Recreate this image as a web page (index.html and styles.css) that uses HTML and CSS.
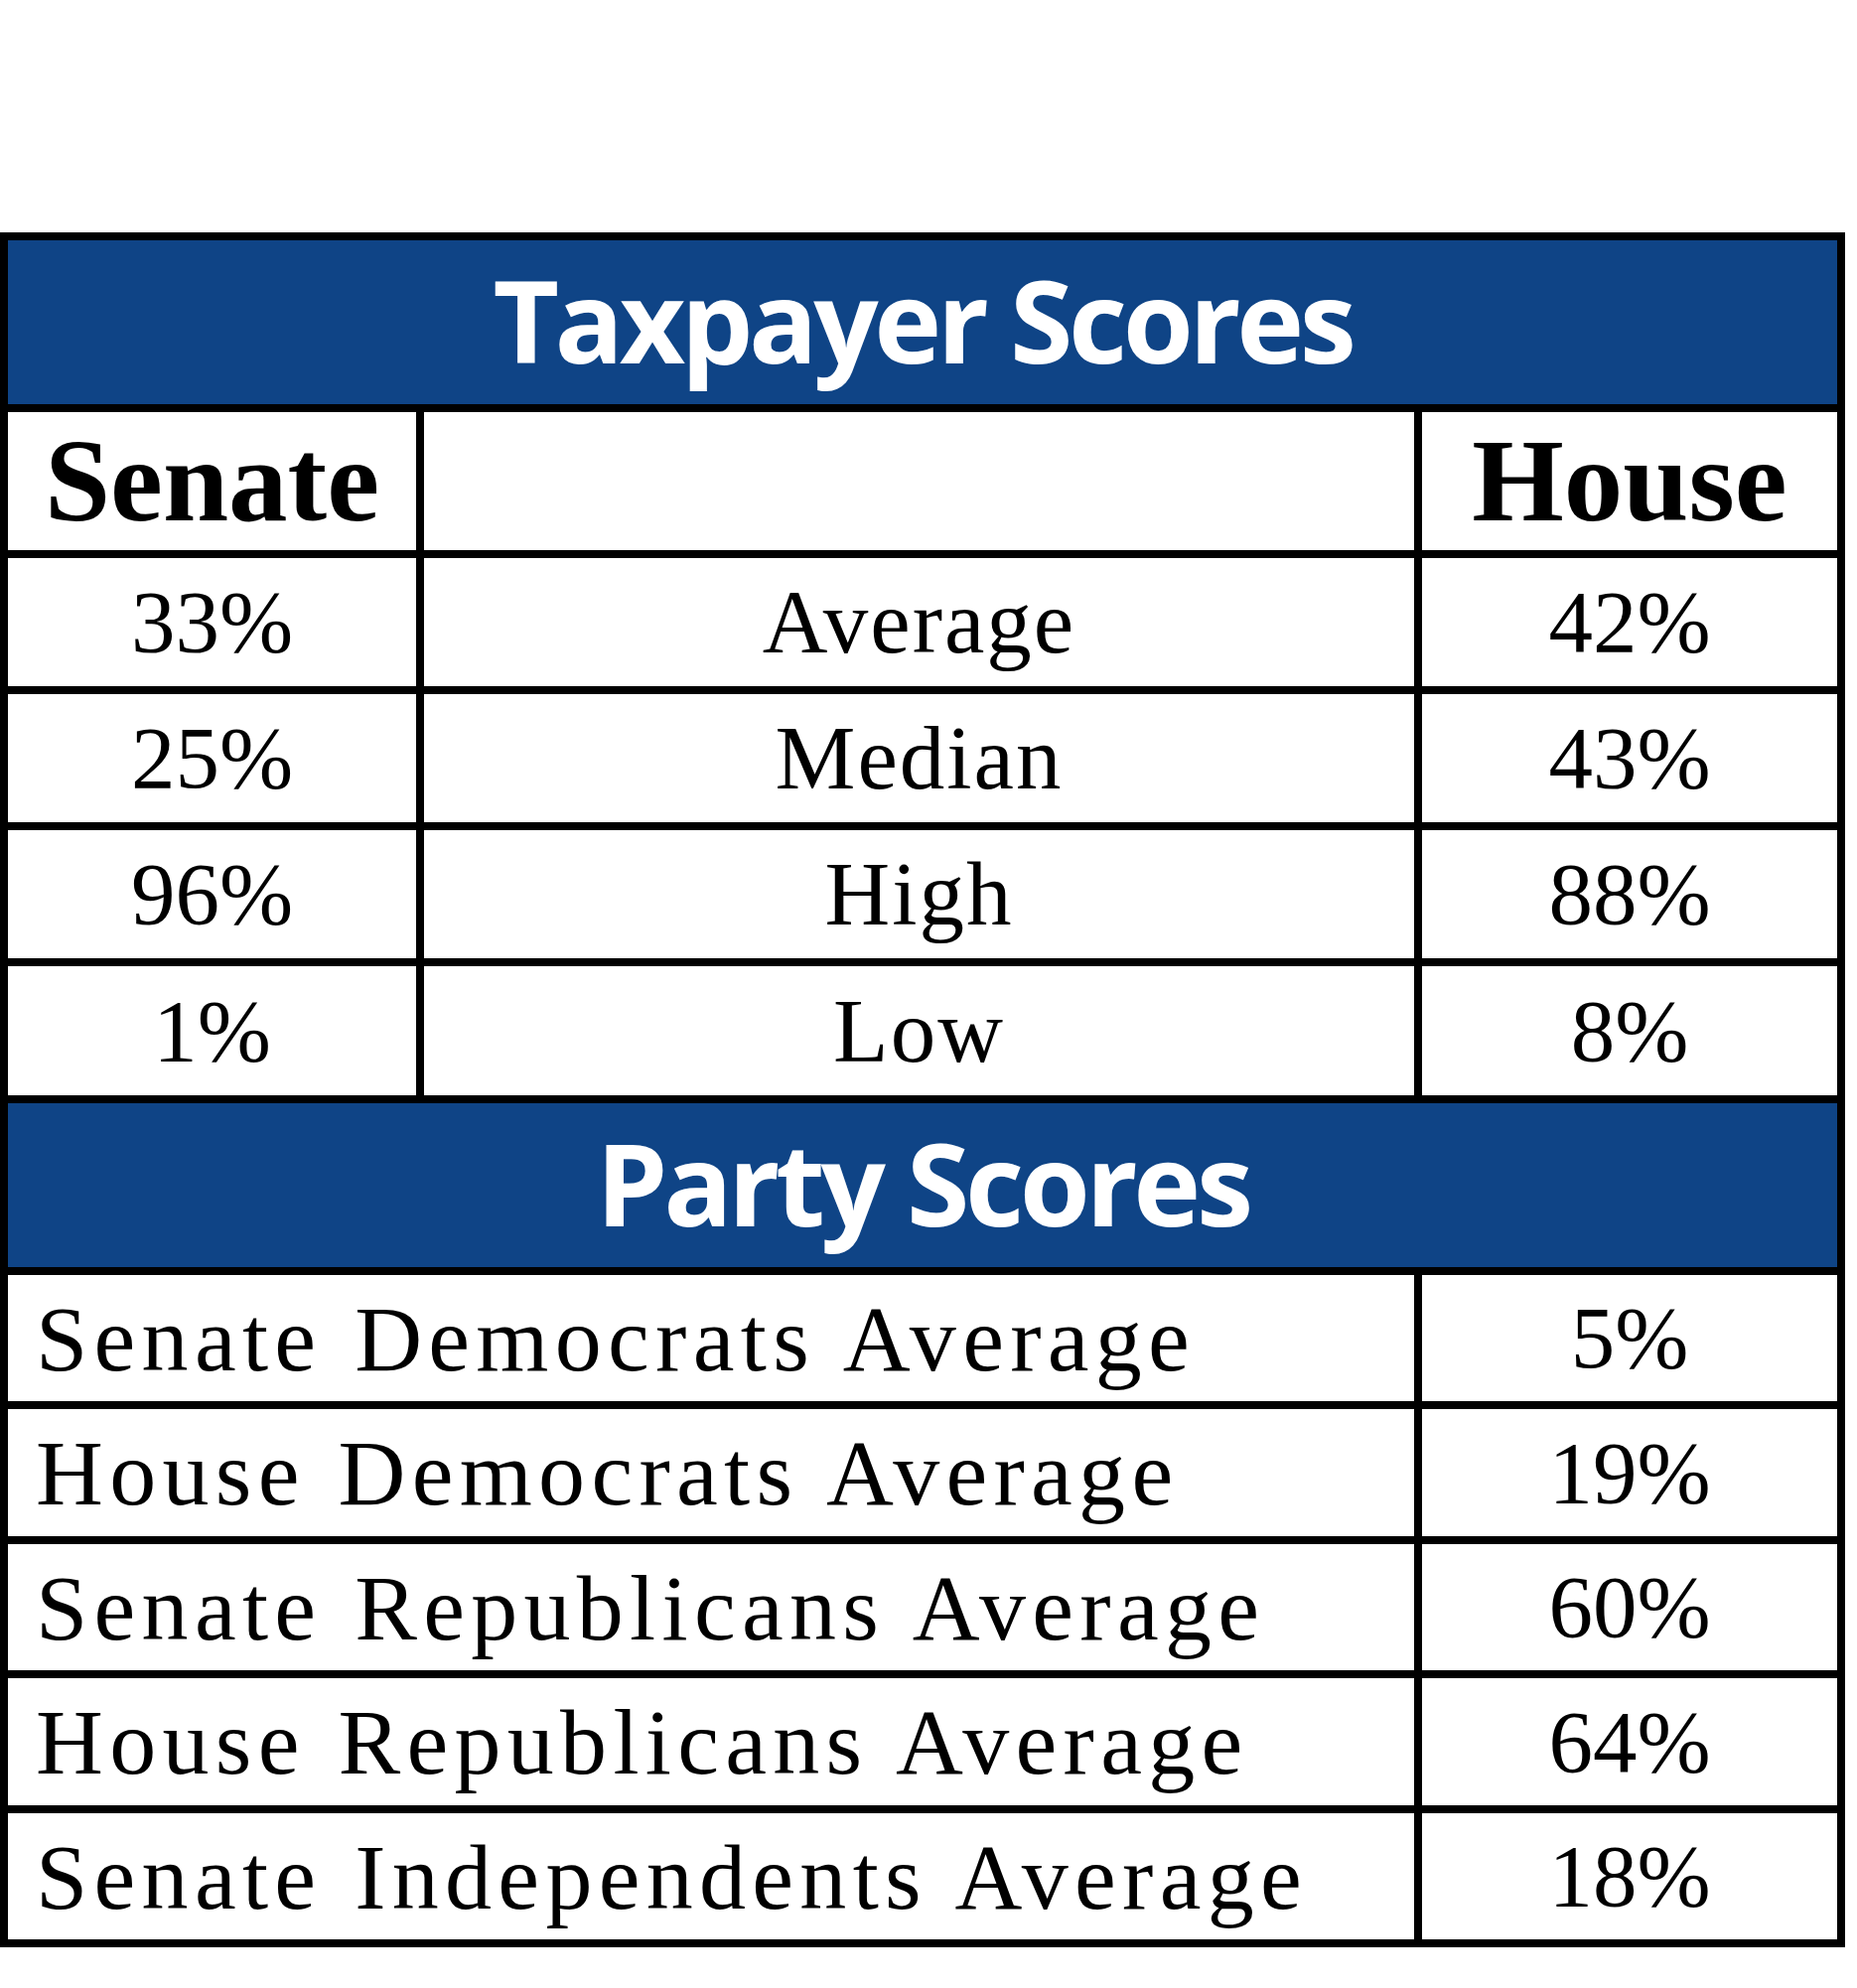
FILE: index.html
```html
<!DOCTYPE html>
<html lang="en">
<head>
<meta charset="utf-8">
<title>Taxpayer Scores</title>
<link rel="stylesheet" href="styles.css">
</head>
<body>
<div class="page">
  <div class="scores">
    <div class="banner">Taxpayer Scores</div>
    <div class="cell chamber">Senate</div>
    <div class="cell"></div>
    <div class="cell chamber">House</div>

    <div class="cell num">33%</div>
    <div class="cell num label">Average</div>
    <div class="cell num">42%</div>

    <div class="cell num">25%</div>
    <div class="cell num label">Median</div>
    <div class="cell num">43%</div>

    <div class="cell num">96%</div>
    <div class="cell num label">High</div>
    <div class="cell num">88%</div>

    <div class="cell num">1%</div>
    <div class="cell num label">Low</div>
    <div class="cell num">8%</div>

    <div class="banner">Party Scores</div>

    <div class="cell party">Senate Democrats Average</div>
    <div class="cell num">5%</div>

    <div class="cell party">House Democrats Average</div>
    <div class="cell num">19%</div>

    <div class="cell party">Senate Republicans Average</div>
    <div class="cell num">60%</div>

    <div class="cell party">House Republicans Average</div>
    <div class="cell num">64%</div>

    <div class="cell party">Senate Independents Average</div>
    <div class="cell num">18%</div>
  </div>
</div>
</body>
</html>
```
FILE: styles.css
```css
html, body {
  margin: 0;
  padding: 0;
  background: #ffffff;
}

.page {
  padding-top: 234px;
}

.scores {
  width: 1858px;
  box-sizing: border-box;
  display: grid;
  grid-template-columns: 411px 997px 418px;
  grid-template-rows: 165px 139px 129px 129px 129px 130px 165px 127px 128px 127px 128px 127px;
  gap: 8px;
  padding: 8px;
  background: #000000;
}

.banner {
  grid-column: 1 / -1;
  background: #0f4486;
  color: #ffffff;
  font-family: "Open Sans", "Noto Sans", sans-serif;
  font-weight: 700;
  font-size: 115px;
  letter-spacing: -4.4px;
  line-height: 1;
  display: flex;
  align-items: center;
  justify-content: center;
  padding-bottom: 6px;
  box-sizing: border-box;
}

.cell {
  background: #ffffff;
  color: #000000;
  font-family: "Liberation Serif", "Times New Roman", serif;
  line-height: 1;
  display: flex;
  align-items: center;
  justify-content: center;
}

.chamber {
  font-weight: 700;
  font-size: 119px;
}

.num {
  font-size: 89px;
}

.label {
  font-size: 91px;
  letter-spacing: 2px;
}

.party {
  grid-column: 1 / 3;
  justify-content: flex-start;
  padding-left: 28px;
  font-size: 94px;
  letter-spacing: 6.3px;
  word-spacing: 3px;
}
```
